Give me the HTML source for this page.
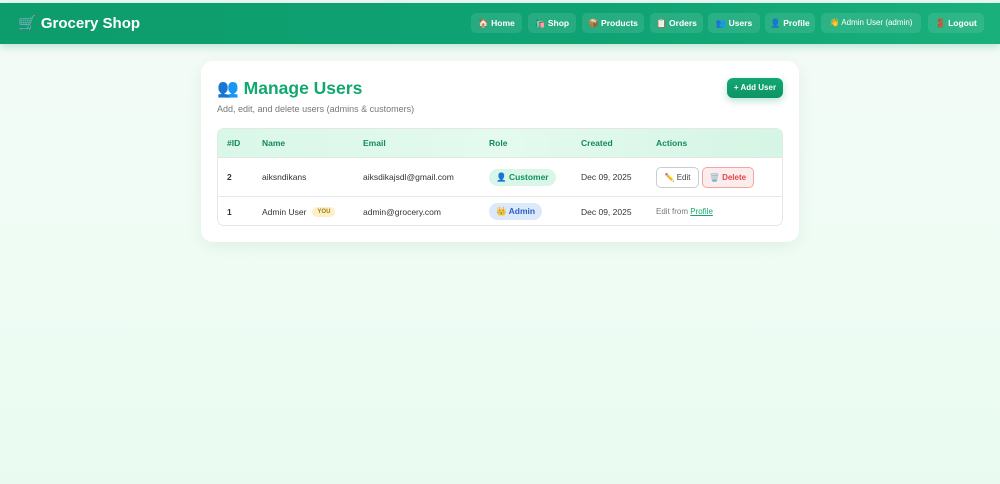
<!DOCTYPE html>
<html><head><meta charset="utf-8"><style>
*{box-sizing:border-box;margin:0;padding:0}
body{width:1000px;height:484px;overflow:hidden;font-family:"Liberation Sans",sans-serif;background:linear-gradient(180deg,#f4fbf7 0%,#eefcf4 60%,#e9fbf1 100%);position:relative}
.top{position:absolute;left:0;top:0;width:1000px;height:3px;background:#eef8f3}
.nav{position:absolute;left:0;top:3px;width:1000px;height:41px;background:linear-gradient(90deg,#0d9c6c,#0fa373 60%,#19b07c);box-shadow:0 3px 8px rgba(16,160,110,.25)}
.brand{position:absolute;left:18px;top:11px;color:#fff;font-weight:bold;font-size:15px}
.links span{position:absolute;top:10px;background:rgba(255,255,255,.1);color:#fff;font-size:8.5px;font-weight:bold;height:20px;line-height:20px;border-radius:5px;text-align:center;white-space:nowrap;overflow:hidden}
.card{position:absolute;left:201px;top:61px;width:598px;height:181px;background:#fff;border-radius:12px;box-shadow:0 4px 16px rgba(0,80,40,.07)}
h1{position:absolute;left:16px;top:17px;font-size:17.5px;color:#12a86d}
.sub{position:absolute;left:16px;top:43px;font-size:9px;color:#777}
.add{position:absolute;left:526px;top:17px;width:56px;height:20px;border-radius:6px;background:linear-gradient(#13a874,#0d9464);color:#fff;font-size:8px;font-weight:bold;text-align:center;line-height:20px;box-shadow:0 3px 8px rgba(16,160,110,.3)}
.tbl{position:absolute;left:16px;top:67px;width:566px;height:98px;border:1px solid #e3e8e5;border-radius:7px;overflow:hidden;font-size:8.5px;color:#333}
.th{height:29px;background:linear-gradient(90deg,#d9f7e8,#e4faef 50%,#d5f5e5);border-bottom:1px solid #dfe8e3;position:relative;color:#128a5c;font-weight:bold}
.r{position:relative;border-bottom:1px solid #e5e9e7}
.c{position:absolute;top:0;height:100%;display:flex;align-items:center}
.pill{border-radius:9px;padding:3px 7px;font-weight:bold}
.btn{height:21px;border-radius:5px;display:inline-flex;align-items:center;justify-content:center;font-size:8px;margin-right:3px}
</style></head><body>
<div class="top"></div>
<div class="nav"><div class="brand">🛒 Grocery Shop</div>
<div class="links"><span style="left:471px;width:51px">🏠 Home</span><span style="left:528px;width:48px">🛍️ Shop</span><span style="left:582px;width:62px">📦 Products</span><span style="left:650px;width:53px">📋 Orders</span><span style="left:708px;width:52px">👥 Users</span><span style="left:765px;width:50px">👤 Profile</span><span style="left:821px;width:100px;font-weight:normal;font-size:8px">👋 Admin User (admin)</span><span style="left:928px;width:56px">🚪 Logout</span></div></div>
<div class="card">
<h1>👥 Manage Users</h1>
<div class="sub">Add, edit, and delete users (admins &amp; customers)</div>
<div class="add">+ Add User</div>
<div class="tbl">
<div class="th"><div class="c" style="left:9px">#ID</div><div class="c" style="left:44px">Name</div><div class="c" style="left:145px">Email</div><div class="c" style="left:271px">Role</div><div class="c" style="left:363px">Created</div><div class="c" style="left:438px">Actions</div></div>
<div class="r" style="height:39px"><div class="c" style="left:9px;font-weight:bold">2</div><div class="c" style="left:44px">aiksndikans</div><div class="c" style="left:145px">aiksdikajsdl@gmail.com</div><div class="c" style="left:271px"><span class="pill" style="background:#daf6e8;color:#139060">👤 Customer</span></div><div class="c" style="left:363px">Dec 09, 2025</div><div class="c" style="left:438px"><span class="btn" style="width:43px;border:1px solid #ccc;color:#444">✏️ Edit</span><span class="btn" style="width:52px;border:1px solid #f2a5a5;background:#fdecec;color:#e04848;font-weight:bold">🗑️ Delete</span></div></div>
<div class="r" style="height:29px;border-bottom:none"><div class="c" style="left:9px;font-weight:bold">1</div><div class="c" style="left:44px">Admin User <span style="background:#fdf0c8;color:#a07a10;font-size:6px;font-weight:bold;border-radius:6px;padding:2px 5px;margin-left:6px">YOU</span></div><div class="c" style="left:145px">admin@grocery.com</div><div class="c" style="left:271px"><span class="pill" style="background:#dbe9fb;color:#2e5fc0">👑 Admin</span></div><div class="c" style="left:363px">Dec 09, 2025</div><div class="c" style="left:438px;color:#777;font-size:8px">Edit from&nbsp;<u style="color:#13a86d">Profile</u></div></div>
</div></div>
</body></html>
